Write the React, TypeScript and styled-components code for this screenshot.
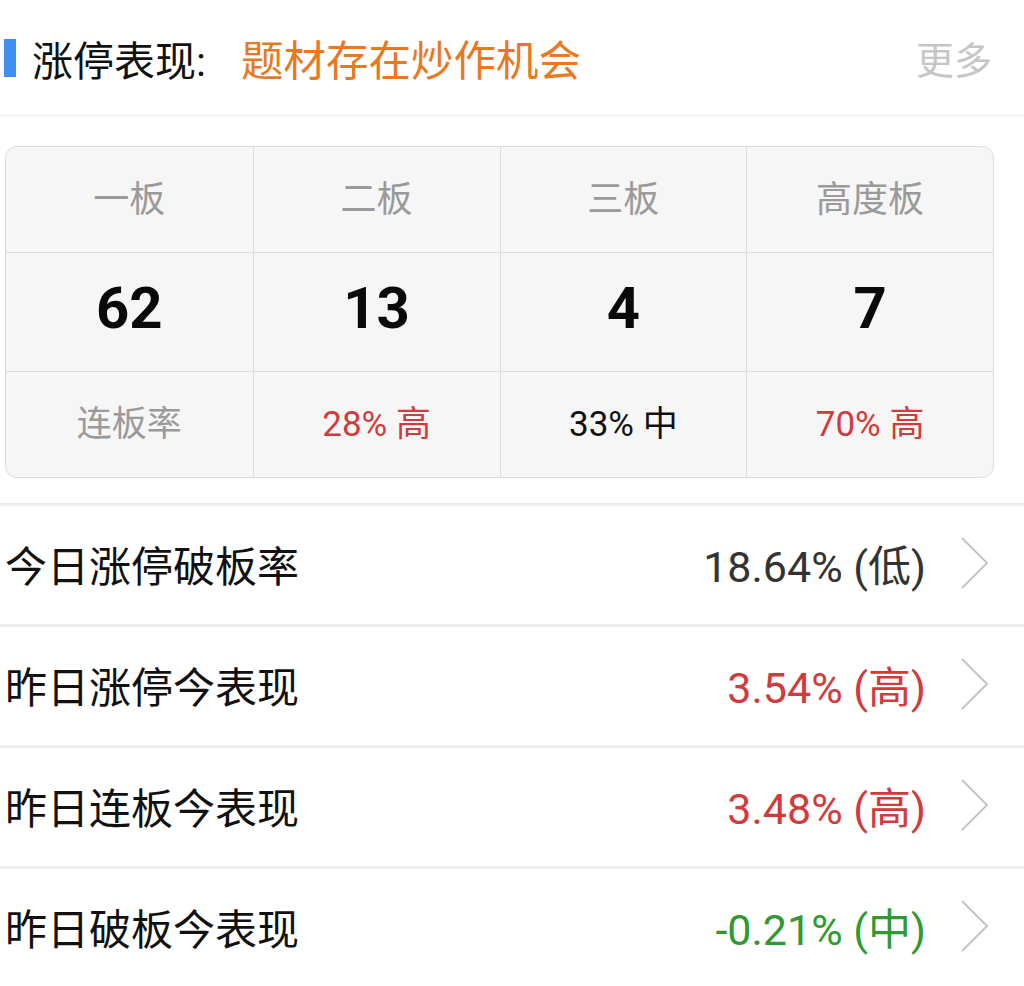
import React, { FC } from "react";
import styled, { createGlobalStyle } from "styled-components";

const GlobalStyle = createGlobalStyle`
  html, body {
    margin: 0;
    padding: 0;
    background: #ffffff;
  }
  body {
    font-family: Roboto, "Noto Sans CJK SC", sans-serif;
    color: #111;
  }
`;

const Page = styled.div`
  width: 1024px;
  background: #fff;
`;

const Header = styled.div`
  height: 116px;
  display: flex;
  align-items: center;
  padding: 0 32px 0 4px;
  box-sizing: border-box;
  border-bottom: 1px solid #ececec;
`;

const TitleMark = styled.span`
  width: 12px;
  height: 38px;
  background: #3f8ff0;
  margin-right: 16px;
`;

const Title = styled.span`
  font-size: 41px;
  color: #111;
  white-space: nowrap;
`;

const Topic = styled.span`
  font-size: 42.5px;
  color: #e9781f;
  margin-left: 35px;
  flex: 1;
`;

const More = styled.span`
  font-size: 38px;
  color: #c6c6c6;
`;

const Board = styled.div`
  margin: 30px 30px 0 5px;
  display: grid;
  grid-template-columns: repeat(4, 1fr);
  grid-template-rows: 105px 119px 106px;
  background: #f6f6f6;
  border: 1px solid #dcdcdc;
  border-radius: 12px;
  overflow: hidden;
`;

const Cell = styled.div<{ $col: number; $row: number }>`
  display: flex;
  align-items: center;
  justify-content: center;
  padding-bottom: 8px;
  border-left: ${(p) => (p.$col > 0 ? "1px solid #dcdcdc" : "none")};
  border-top: ${(p) => (p.$row > 0 ? "1px solid #dcdcdc" : "none")};
`;

const HeadText = styled.span`
  font-size: 36px;
  color: #9a9a9a;
`;

const Count = styled.span`
  font-size: 58px;
  font-weight: 700;
  color: #0a0a0a;
`;

const Rate = styled.span<{ $color: string }>`
  font-size: 35px;
  color: ${(p) => p.$color};
`;

const List = styled.div`
  margin-top: 25px;
`;

const Row = styled.div`
  height: 114px;
  display: flex;
  align-items: center;
  padding: 0 34px 4px 5px;
  box-sizing: content-box;
  border-top: 3px solid #eeeeee;
`;

const RowLabel = styled.span`
  font-size: 42px;
  color: #111;
  flex: 1;
`;

const RowValue = styled.span<{ $color: string }>`
  font-size: 43px;
  color: ${(p) => p.$color};
  margin-right: 34px;
`;

const Chevron = styled.svg`
  width: 30px;
  height: 54px;
  flex: none;
`;

const RED = "#d23b3b";
const GREEN = "#2f9a2f";

const heads = ["一板", "二板", "三板", "高度板"];
const counts = ["62", "13", "4", "7"];
const rates = [
  { text: "连板率", color: "#9a9a9a" },
  { text: "28% 高", color: RED },
  { text: "33% 中", color: "#111" },
  { text: "70% 高", color: RED },
];

const rows = [
  { label: "今日涨停破板率", value: "18.64% (低)", color: "#333" },
  { label: "昨日涨停今表现", value: "3.54% (高)", color: RED },
  { label: "昨日连板今表现", value: "3.48% (高)", color: RED },
  { label: "昨日破板今表现", value: "-0.21% (中)", color: GREEN },
];

const App: FC = () => {
  return (
    <Page>
      <GlobalStyle />
      <Header>
        <TitleMark />
        <Title>涨停表现:</Title>
        <Topic>题材存在炒作机会</Topic>
        <More>更多</More>
      </Header>

      <Board>
        {heads.map((h, i) => (
          <Cell key={h} $col={i} $row={0}>
            <HeadText>{h}</HeadText>
          </Cell>
        ))}
        {counts.map((c, i) => (
          <Cell key={"c" + i} $col={i} $row={1}>
            <Count>{c}</Count>
          </Cell>
        ))}
        {rates.map((r, i) => (
          <Cell key={"r" + i} $col={i} $row={2}>
            <Rate $color={r.color}>{r.text}</Rate>
          </Cell>
        ))}
      </Board>

      <List>
        {rows.map((r) => (
          <Row key={r.label}>
            <RowLabel>{r.label}</RowLabel>
            <RowValue $color={r.color}>{r.value}</RowValue>
            <Chevron viewBox="0 0 30 54">
              <polyline points="2,2 27,27 2,52" fill="none" stroke="#c4c4c4" strokeWidth="2" />
            </Chevron>
          </Row>
        ))}
      </List>
    </Page>
  );
};

export default App;
